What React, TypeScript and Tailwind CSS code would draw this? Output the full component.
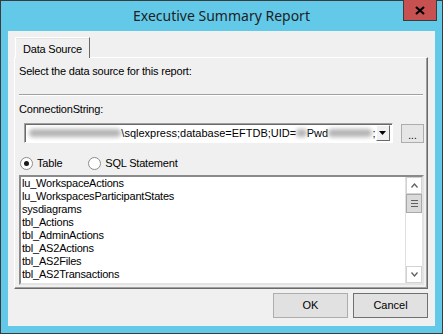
import React from 'react';

const tables = [
  'lu_WorkspaceActions',
  'lu_WorkspacesParticipantStates',
  'sysdiagrams',
  'tbl_Actions',
  'tbl_AdminActions',
  'tbl_AS2Actions',
  'tbl_AS2Files',
  'tbl_AS2Transactions',
  'tbl_Authentications',
];

const Radio: React.FC<{ checked?: boolean; label: string }> = ({ checked, label }) => (
  <div className="flex items-center gap-[4px]">
    <div className="w-[13px] h-[13px] rounded-full border border-[#8c8c8c] bg-white flex items-center justify-center">
      {checked && <div className="w-[5px] h-[5px] rounded-full bg-[#1a1a1a]" />}
    </div>
    <span>{label}</span>
  </div>
);

const Blur: React.FC<{ w: string }> = ({ w }) => (
  <span className={`inline-block h-[8px] ${w} rounded-full bg-[#b4b4b4] blur-[2px]`} />
);

const App: React.FC = () => {
  return (
    <div className="w-[443px] h-[334px] bg-[#62c9e9] border border-[#3b3b3b] flex flex-col font-['Liberation_Sans',Arial,sans-serif] text-[11px] leading-[13px] text-black">
      {/* Title bar */}
      <div className="relative h-[30px] flex items-center justify-center">
        <span className="font-['Noto_Sans',sans-serif] text-[14px] text-[#1e1e1e] pb-[1px]">
          Executive Summary Report
        </span>
        <div className="absolute right-[5px] top-[-1px] w-[34px] h-[21px] bg-[#c75050] border border-t-0 border-[#3c3c3c] flex items-center justify-center">
          <svg width="10" height="9" viewBox="0 0 10 9">
            <path d="M1 1 L9 8 M9 1 L1 8" stroke="#000" strokeWidth="2.2" />
          </svg>
        </div>
      </div>

      {/* Client area */}
      <div className="mx-[7px] h-[295px] bg-[#f0f0f0] flex flex-col pl-[6px] pr-[7px] pt-[6px]">
        {/* Tab strip */}
        <div className="h-[20px] flex pl-[1px]">
          <div className="relative z-10 w-[75px] h-[21px] bg-[#f0f0f0] border-t border-l border-white shadow-[inset_0_1px_0_#e3e3e3] border-r border-r-[#696969] flex items-center pl-[7px] pt-[2px] tracking-[-0.2px]">
            Data Source
          </div>
        </div>

        {/* Tab panel */}
        <div className="h-[232px] border border-t-white border-l-white border-r-[#696969] border-b-[#696969] shadow-[inset_-1px_-1px_0_#a0a0a0] flex flex-col">
          <div className="h-[7px]" />
          <div className="pl-[4px] h-[13px] tracking-[-0.2px]">Select the data source for this report:</div>
          <div className="h-[16px]" />
          <div className="mx-[4px] h-[2px] border-t border-[#a0a0a0] border-b border-b-white" />
          <div className="h-[7px]" />
          <div className="pl-[4px] h-[13px] tracking-[-0.2px]">ConnectionString:</div>
          <div className="h-[7px]" />

          {/* Combo row */}
          <div className="h-[20px] flex pl-[9px] gap-[8px]">
            <div className="w-[369px] h-[20px] bg-white border border-t-[#a0a0a0] border-l-[#a0a0a0] border-r-white border-b-white shadow-[inset_1px_1px_0_#696969] flex items-center pl-[4px] pr-[2px] overflow-hidden">
              <Blur w="w-[96px]" />
              <span className="whitespace-nowrap">\sqlexpress;database=EFTDB;UID=</span>
              <Blur w="w-[11px]" />
              <span>Pwd</span>
              <Blur w="w-[46px]" />
              <span>;</span>
              <div className="ml-auto w-[15px] h-[16px] bg-[#f0f0f0] border border-white border-r-[#696969] border-b-[#696969] flex items-center justify-center">
                <svg width="7" height="4" viewBox="0 0 7 4">
                  <path d="M0 0 H7 L3.5 4 Z" fill="#000" />
                </svg>
              </div>
            </div>
            <div className="w-[23px] h-[19px] mt-[1px] bg-[#e6e6e6] border border-[#adadad] flex items-end justify-center pb-[3px] text-[10px] leading-[6px]">
              ...
            </div>
          </div>

          <div className="h-[13px]" />
          {/* Radios */}
          <div className="h-[14px] flex items-center pl-[5px] gap-[26px] tracking-[-0.2px]">
            <Radio checked label="Table" />
            <Radio label="SQL Statement" />
          </div>
          <div className="h-[5px]" />

          {/* List box */}
          <div className="ml-[4px] w-[405px] h-[110px] bg-white border-2 border-t-[#8a8a8a] border-l-[#8a8a8a] border-r-[#e3e3e3] border-b-[#e3e3e3] flex overflow-hidden">
            <div className="flex-1 pl-[1px] overflow-hidden tracking-[-0.2px]">
              {tables.map((t) => (
                <div key={t} className="h-[13px] whitespace-nowrap">
                  {t}
                </div>
              ))}
            </div>
            <div className="w-[17px] border-l border-[#e0e0e0] bg-white flex flex-col">
              <div className="h-[17px] border border-[#d2d2d2] flex items-center justify-center">
                <svg width="7" height="5" viewBox="0 0 7 5">
                  <path d="M0.5 4.5 L3.5 1 L6.5 4.5" stroke="#606060" strokeWidth="1.3" fill="none" />
                </svg>
              </div>
              <div className="h-[19px] bg-[#dadada] border border-[#a9a9a9] flex flex-col items-center justify-center gap-[2px]">
                <div className="w-[7px] h-[1px] bg-[#606060]" />
                <div className="w-[7px] h-[1px] bg-[#606060]" />
                <div className="w-[7px] h-[1px] bg-[#606060]" />
              </div>
              <div className="flex-1" />
              <div className="h-[17px] border border-[#d2d2d2] flex items-center justify-center">
                <svg width="7" height="5" viewBox="0 0 7 5">
                  <path d="M0.5 0.5 L3.5 4 L6.5 0.5" stroke="#606060" strokeWidth="1.3" fill="none" />
                </svg>
              </div>
            </div>
          </div>
        </div>

        {/* Buttons */}
        <div className="flex justify-end gap-[5px] mt-[4px]">
          <button className="w-[75px] h-[25px] bg-[#e1e1e1] border border-[#adadad]">OK</button>
          <button className="w-[75px] h-[25px] bg-[#e1e1e1] border border-[#707070]">Cancel</button>
        </div>
      </div>
    </div>
  );
};

export default App;
